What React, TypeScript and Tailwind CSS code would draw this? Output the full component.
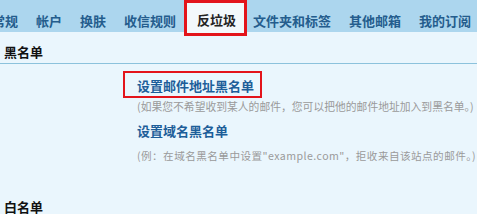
import React from "react";

const font = { fontFamily: '"Noto Sans CJK SC", "Noto Sans", sans-serif' };

const tabs = ["常规", "帐户", "换肤", "收信规则", "反垃圾", "文件夹和标签", "其他邮箱", "我的订阅"];

const App = () => {
  return (
    <div className="w-[477px] h-[214px] overflow-hidden bg-[#eaf6fd]" style={font}>
      {/* Tab bar */}
      <div className="h-[32px] bg-[#acd6ee] flex items-start -ml-[17px] whitespace-nowrap">
        {tabs.map((t) =>
          t === "反垃圾" ? (
            <div
              key={t}
              className="relative z-10 h-[36px] pl-[10px] pr-[8px] pt-[4px] bg-[#f3f8fb] border-[3px] border-[#e3141b] text-[13px] font-bold text-[#222] leading-[26px] ml-[-1px] mr-[-3px]"
            >
              {t}
            </div>
          ) : (
            <div key={t} className="px-[9px] text-[13px] font-bold text-[#245d8d] leading-[42px]">
              {t}
            </div>
          )
        )}
      </div>

      {/* Blacklist header */}
      <div className="h-[32px] flex items-end pb-[3px] pl-[4px] border-b border-[#8cc2dc]">
        <span className="text-[13px] font-bold text-[#111] leading-[17px]">黑名单</span>
      </div>

      {/* Blacklist options */}
      <div className="pt-[7px]">
        <div className="ml-[123px] w-[139px] h-[27px] border-2 border-[#e3141b] flex items-end pb-[2px] pl-[12px]">
          <span className="text-[13px] font-bold text-[#1d5e99] leading-[17px]">设置邮件地址黑名单</span>
        </div>
        <div className="ml-[137px] pt-[1px] text-[10.8px] text-[#9a9a9a] leading-[14px] whitespace-nowrap">
          (如果您不希望收到某人的邮件，您可以把他的邮件地址加入到黑名单。)
        </div>
        <div className="ml-[137px] mt-[9px] text-[13px] font-bold text-[#1d5e99] leading-[17px]">
          设置域名黑名单
        </div>
        <div className="ml-[137px] mt-[10px] text-[10.6px] tracking-[0.45px] text-[#9a9a9a] leading-[14px] whitespace-nowrap">
          (例：在域名黑名单中设置"example.com"，拒收来自该站点的邮件。)
        </div>
      </div>

      {/* Whitelist header */}
      <div className="mt-[37px] pl-[4px] text-[13px] font-bold text-[#111] leading-[13px]">白名单</div>
    </div>
  );
};

export default App;
